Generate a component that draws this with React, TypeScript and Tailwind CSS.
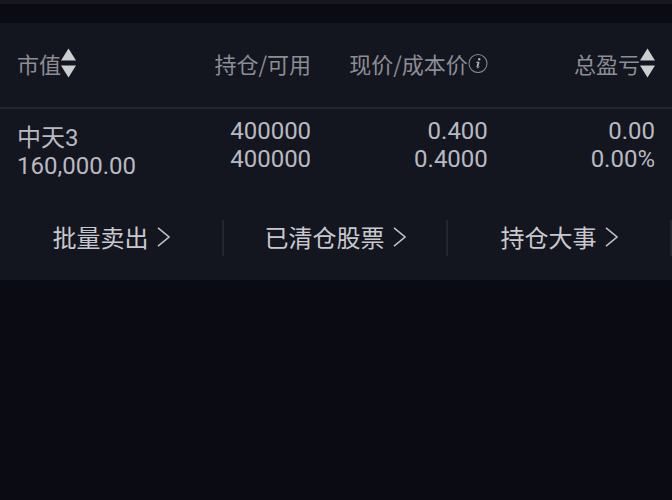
import type { ReactNode } from 'react';

const positions = [
  {
    name: '中天3',
    marketValue: '160,000.00',
    held: '400000',
    available: '400000',
    price: '0.400',
    cost: '0.4000',
    profit: '0.00',
    profitRate: '0.00%',
  },
];

const links = ['批量卖出', '已清仓股票', '持仓大事'];

function SortIcon() {
  return (
    <svg width="15" height="30" viewBox="0 0 15 30" fill="#cdced0" aria-hidden="true">
      <path d="M7.5 0.5 L15 12.5 H0 Z" />
      <path d="M7.5 29.5 L15 17.5 H0 Z" />
    </svg>
  );
}

function InfoIcon() {
  return (
    <svg width="20" height="20" viewBox="0 0 20 20" fill="none" aria-hidden="true">
      <circle cx="10" cy="10.5" r="9" stroke="#85868f" strokeWidth="1.1" />
      <circle cx="11.2" cy="6.3" r="1.2" fill="#b0b1b8" />
      <path d="M8.2 9.4 L10.7 9" stroke="#b0b1b8" strokeWidth="0.9" />
      <path d="M10.7 9 L9.3 14.1" stroke="#b0b1b8" strokeWidth="1.8" />
      <path d="M9 14.1 C9 15.3 10.4 15.1 11.5 13.5" stroke="#b0b1b8" strokeWidth="0.9" />
    </svg>
  );
}

function Chevron() {
  return (
    <svg width="13" height="20" viewBox="0 0 13 20" fill="none" aria-hidden="true">
      <path d="M1 0.8 L12 10 L1 19.2" stroke="#bfc0c5" strokeWidth="1.5" />
    </svg>
  );
}

function SortButton({ children }: { children: ReactNode }) {
  return (
    <button type="button" className="flex items-center">
      {children}
      <SortIcon />
    </button>
  );
}

export default function App() {
  return (
    <div className="min-h-screen bg-[#0b0b14] font-['Roboto','Noto_Sans_CJK_SC',sans-serif] text-[#b9bac1]">
      <div className="h-1 bg-[#171822]" />

      <main className="mt-[19px] bg-[#14161f] pb-6">
        <table className="w-full table-fixed border-collapse">
          <colgroup>
            <col className="w-[22%]" />
            <col className="w-[24.3%]" />
            <col className="w-[26.3%]" />
            <col />
          </colgroup>
          <thead className="border-b-2 border-[#22252c] font-['Noto_Sans_CJK_SC',sans-serif] text-[22px] text-[#8c8d95]">
            <tr className="h-[85px] whitespace-nowrap *:pb-1 *:font-normal">
              <th scope="col" className="pl-[17px]">
                <SortButton>市值</SortButton>
              </th>
              <th scope="col" className="text-right">持仓/可用</th>
              <th scope="col">
                <div className="flex items-center justify-end">
                  现价/成本价
                  <InfoIcon />
                </div>
              </th>
              <th scope="col" className="pr-[17px]">
                <div className="flex justify-end">
                  <SortButton>总盈亏</SortButton>
                </div>
              </th>
            </tr>
          </thead>
          <tbody className="text-2xl leading-7">
            {positions.map((p) => (
              <tr key={p.name} className="align-top text-right">
                <td className="pt-[15px] pl-[17px] text-left">
                  <div>{p.name}</div>
                  <div>{p.marketValue}</div>
                </td>
                <td className="pt-2">
                  <div>{p.held}</div>
                  <div>{p.available}</div>
                </td>
                <td className="pt-2">
                  <div>{p.price}</div>
                  <div>{p.cost}</div>
                </td>
                <td className="pt-2 pr-[17px]">
                  <div>{p.profit}</div>
                  <div>{p.profitRate}</div>
                </td>
              </tr>
            ))}
          </tbody>
        </table>

        <nav className="mt-10 grid grid-cols-3 font-['Noto_Sans_CJK_SC',sans-serif] text-2xl text-[#c8c9ce]">
          {links.map((label) => (
            <a
              key={label}
              href="#"
              className="flex h-9 items-center justify-center gap-2 border-r-2 border-[#23252e] pb-[2px] whitespace-nowrap"
            >
              {label}
              <Chevron />
            </a>
          ))}
        </nav>
      </main>
    </div>
  );
}
